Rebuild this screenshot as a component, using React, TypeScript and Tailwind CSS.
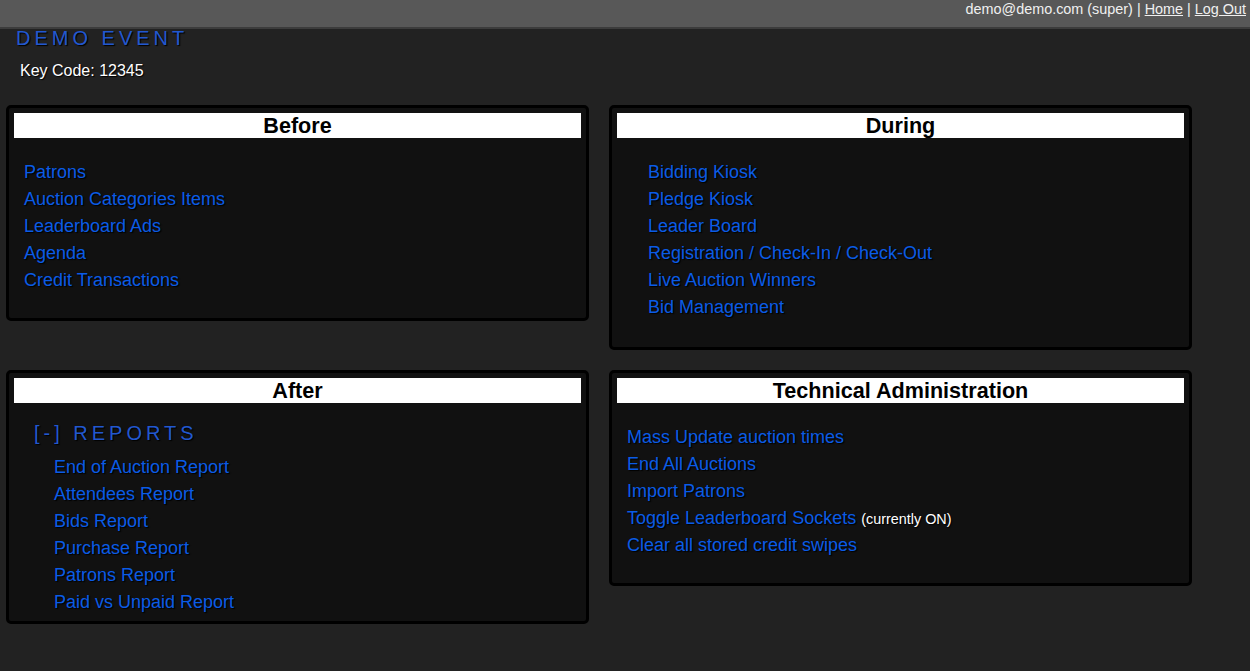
import React from "react";

const linkCls =
  "text-[#0b5ce6] [text-shadow:1px_1px_1px_#000] hover:underline cursor-pointer";

function Panel({
  title,
  children,
}: {
  title: string;
  children: React.ReactNode;
}) {
  return (
    <div className="w-[583px] border-[3px] border-black rounded-[5px] bg-[#111111] p-[5px]">
      <div className="h-[25px] bg-white text-center text-black font-bold text-[21.6px] leading-[25px]">
        {title}
      </div>
      {children}
    </div>
  );
}

function Links({ items, cls }: { items: string[]; cls: string }) {
  return (
    <div className={"flex flex-col text-[18px] leading-[27px] " + cls}>
      {items.map((t) => (
        <div key={t} className="h-[27px]">
          <a className={linkCls}>{t}</a>
        </div>
      ))}
    </div>
  );
}

export default function App() {
  return (
    <div
      className="min-h-[671px] bg-[#222222] text-white"
      style={{ fontFamily: '"Liberation Sans", Arial, sans-serif' }}
    >
      <div className="h-[29px] bg-[#585858] border-b-[2px] border-[#3c3c3c] flex justify-end pr-[4px] text-[14.4px] leading-[18px] text-[#f0f0f0]">
        <span>
          demo@demo.com (super) | <a className="underline cursor-pointer">Home</a> |{" "}
          <a className="underline cursor-pointer">Log Out</a>
        </span>
      </div>
      <div className="pl-[16px] -mt-[1px] text-[20px] leading-[20px] tracking-[4px] text-[#2258d0] [text-shadow:1px_1px_1px_#000]">
        DEMO EVENT
      </div>
      <div className="pl-[20px] pt-[14px] text-[16px] leading-[18px] text-white [text-shadow:1px_1px_1px_#000]">
        Key Code: 12345
      </div>
      <div className="grid grid-cols-[583px_583px] gap-x-[20px] gap-y-[20px] items-start pl-[6px] pt-[25px]">
        <Panel title="Before">
          <Links
            cls="pl-[10px] pt-[21px] pb-[19px]"
            items={[
              "Patrons",
              "Auction Categories Items",
              "Leaderboard Ads",
              "Agenda",
              "Credit Transactions",
            ]}
          />
        </Panel>
        <Panel title="During">
          <Links
            cls="pl-[31px] pt-[21px] pb-[21px]"
            items={[
              "Bidding Kiosk",
              "Pledge Kiosk",
              "Leader Board",
              "Registration / Check-In / Check-Out",
              "Live Auction Winners",
              "Bid Management",
            ]}
          />
        </Panel>
        <Panel title="After">
          <div className="h-[42px] pl-[20px] pt-[18px] text-[20px] leading-[24px] tracking-[4px] text-[#2258d0] [text-shadow:1px_1px_1px_#000]">
            [-] REPORTS
          </div>
          <Links
            cls="pl-[40px] pt-[9px]"
            items={[
              "End of Auction Report",
              "Attendees Report",
              "Bids Report",
              "Purchase Report",
              "Patrons Report",
              "Paid vs Unpaid Report",
            ]}
          />
        </Panel>
        <Panel title="Technical Administration">
          <div className="flex flex-col pl-[10px] pt-[21px] pb-[19px] text-[18px] leading-[27px]">
            <div className="h-[27px]">
              <a className={linkCls}>Mass Update auction times</a>
            </div>
            <div className="h-[27px]">
              <a className={linkCls}>End All Auctions</a>
            </div>
            <div className="h-[27px]">
              <a className={linkCls}>Import Patrons</a>
            </div>
            <div className="h-[27px]">
              <a className={linkCls}>Toggle Leaderboard Sockets</a>{" "}
              <span className="text-[14.4px] text-white [text-shadow:1px_1px_1px_#000]">
                (currently ON)
              </span>
            </div>
            <div className="h-[27px]">
              <a className={linkCls}>Clear all stored credit swipes</a>
            </div>
          </div>
        </Panel>
      </div>
    </div>
  );
}
